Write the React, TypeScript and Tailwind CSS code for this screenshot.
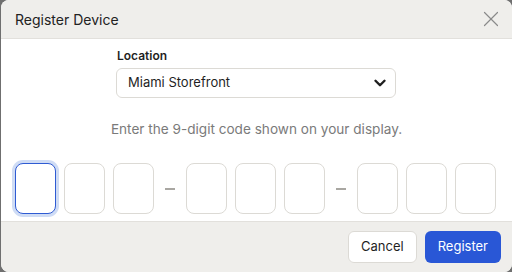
import { ChevronDown, X } from "lucide-react";

const groups = [3, 3, 3];

function CodeBox({ focused }: { focused?: boolean }) {
  return (
    <input
      type="text"
      maxLength={1}
      className={
        focused
          ? "w-[41px] h-[51px] rounded-lg border border-[#2f5bd3] bg-white outline-none ring-[3px] ring-[#cfdcf5]"
          : "w-[41px] h-[51px] rounded-lg border border-[#dcdad5] bg-white outline-none"
      }
    />
  );
}

export default function App() {
  return (
    <div
      className="w-[512px] h-[272px] bg-[#6f6f6f] pl-px"
      style={{ fontFamily: "Inter, 'Noto Sans', sans-serif" }}
    >
      <div className="flex flex-col h-full rounded-lg overflow-hidden bg-white">
        <div className="flex items-center justify-between h-[39px] pl-[14px] pr-[8px] bg-[#efeeeb] border-b border-[#e2e0dc]">
          <span className="text-[14px] text-[#222]">Register Device</span>
          <X className="w-[26px] h-[26px] text-[#8a8a8a]" strokeWidth={1.1} />
        </div>

        <div className="flex flex-col flex-1 pt-[9px]">
          <div className="flex flex-col w-[280px] ml-[115px]">
            <label className="text-[12px] font-semibold text-[#1f1f1f] leading-[16px] mb-[4px] ml-px">
              Location
            </label>
            <div className="flex items-center justify-between h-[30px] rounded-md border border-[#dcdad5] pl-[11px] pr-[6px]">
              <span className="text-[13px] text-[#1f1f1f]">Miami Storefront</span>
              <ChevronDown className="w-[18px] h-[18px] text-[#1f1f1f]" strokeWidth={3.2} />
            </div>
          </div>

          <p className="mt-[22px] text-center text-[13.6px] text-[#7a7a7a] leading-[18px]">
            Enter the 9-digit code shown on your display.
          </p>

          <div className="flex items-center mt-[25px] ml-[14px]">
            {groups.map((n, g) => (
              <div key={g} className="flex items-center">
                {g > 0 && <div className="w-[10px] h-[2px] bg-[#a9a7a2] mx-[11px]" />}
                <div className="flex gap-2">
                  {Array.from({ length: n }).map((_, i) => (
                    <CodeBox key={i} focused={g === 0 && i === 0} />
                  ))}
                </div>
              </div>
            ))}
          </div>
        </div>

        <div className="flex items-center justify-end gap-2 h-[51px] pr-[11px] bg-[#efeeeb] border-t border-[#e2e0dc]">
          <button className="h-[32px] px-[12px] rounded-md border border-[#dcdad5] bg-white text-[13px] text-[#1f1f1f]">
            Cancel
          </button>
          <button className="h-[32px] px-[13px] rounded-md bg-[#2957d6] text-[13px] text-white">
            Register
          </button>
        </div>
      </div>
    </div>
  );
}
